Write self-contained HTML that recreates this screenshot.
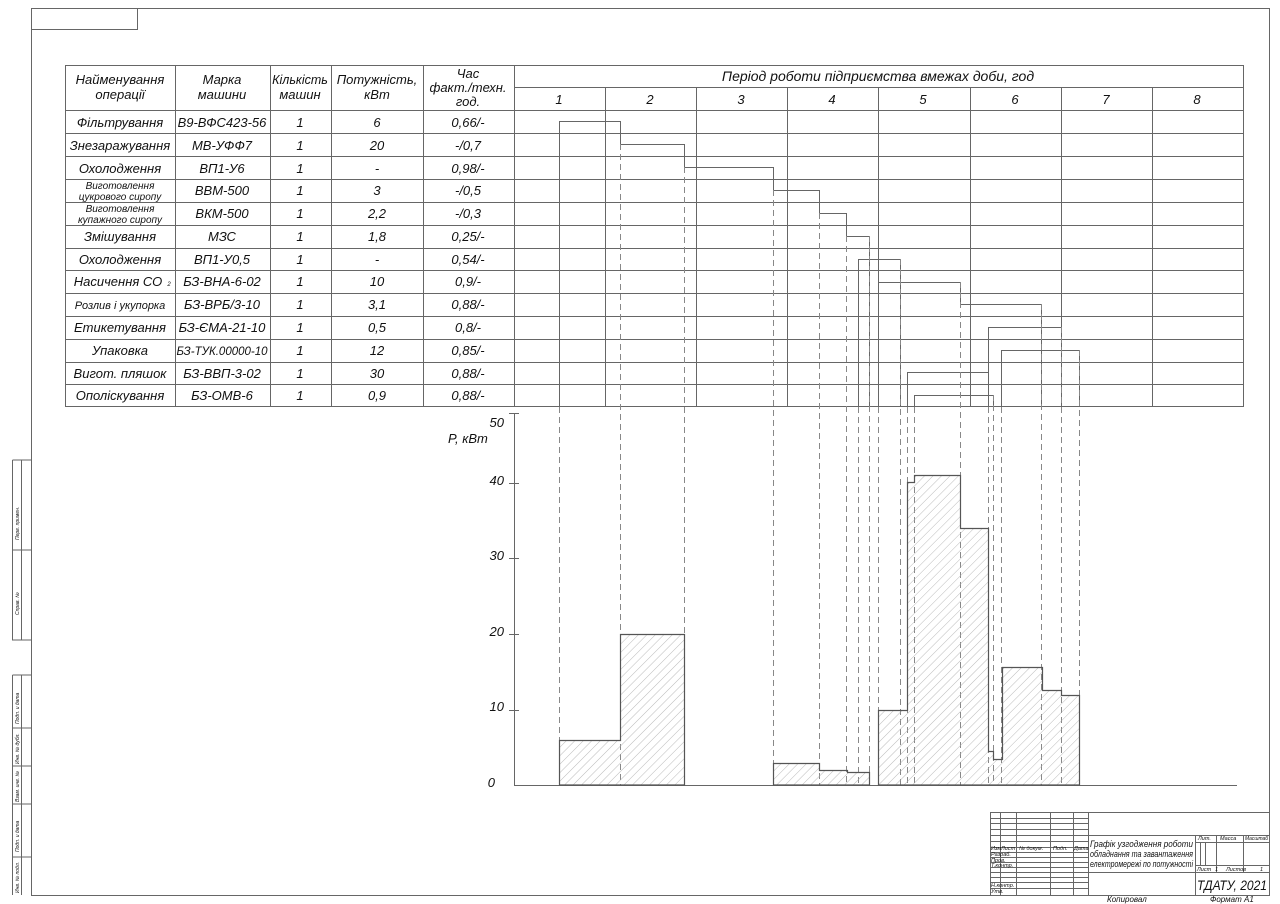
<!DOCTYPE html>
<html><head><meta charset="utf-8"><style>
html,body{margin:0;padding:0;background:#fff;width:1280px;height:904px;overflow:hidden}
svg{display:block}
text{font-family:"Liberation Sans",sans-serif;font-style:italic;fill:#111}
</style></head><body>
<svg width="1280" height="904" viewBox="0 0 1280 904" xmlns="http://www.w3.org/2000/svg">
<defs>
<pattern id="h" patternUnits="userSpaceOnUse" width="6" height="6" patternTransform="rotate(45)">
<line x1="0" y1="0" x2="0" y2="6" stroke="#aaa" stroke-width="0.8"/>
</pattern>
</defs>
<g stroke="#666" stroke-width="1" fill="none">
<rect x="31.5" y="8.5" width="1238" height="887"/>
<rect x="31.5" y="8.5" width="106" height="21"/>
<path d="M12.5 460V640H31.5M12.5 460H31.5M12.5 550H31.5M21.5 460V640"/>
<path d="M12.5 675V895M12.5 675H31.5M12.5 728H31.5M12.5 766H31.5M12.5 804H31.5M12.5 857H31.5M21.5 675V895"/>
<rect x="65.5" y="65.5" width="1178" height="341"/>
<path d="M175.5 65V407M270.5 65V407M331.5 65V407M423.5 65V407M514.5 65V407"/>
<path d="M514 87.5H1243"/>
<path d="M605.5 87V407M696.5 87V407M787.5 87V407M878.5 87V407M970.5 87V407M1061.5 87V407M1152.5 87V407"/>
<path d="M65 110.5H1243M65 133.5H1243M65 156.5H1243M65 179.5H1243M65 202.5H1243M65 225.5H1243M65 248.5H1243M65 270.5H1243M65 293.5H1243M65 316.5H1243M65 339.5H1243M65 362.5H1243M65 384.5H1243"/>
<path d="M559.5 407V121.5H620.5V144.5H684.5V167.5H773.5V190.5H819.5V213.5H846.5V236.5H869.5V407"/>
<path d="M858.5 407V259.5H900.5V407M878.5 282.5H960.5V304.5H1041.5V407M988.5 407V327.5H1061.5V407M1001.5 407V350.5H1079.5V407M907.5 407V372.5H988.5M914.5 407V395.5H993.5V407"/>
<g stroke-dasharray="6 4" stroke="#888">
<path d="M559.5 407V785M620.5 144V785M684.5 167V785M773.5 190V785M819.5 213V785M846.5 236V785M869.5 236V785M858.5 407V785M900.5 259V785M878.5 407V785M960.5 282V785M1041.5 304V785M988.5 407V785M1061.5 327V785M1001.5 407V785M1079.5 350V785M907.5 407V785M914.5 407V785M993.5 395V785"/>
</g>
<path d="M514.5 413V785.5H1237M509 413.5H519M509 483.5H519M509 558.5H519M509 634.5H519M509 710.5H519"/>
</g>
<g fill="url(#h)" stroke="#555" stroke-width="1.2">
<path d="M559.5 785V740.5H620.5V634.5H684.5V785Z"/>
<path d="M773.5 785V763.5H819.5V770.5H847.5V772.5H869.5V785Z"/>
<path d="M878.5 785V710.5H907.5V482.5H914.5V475.5H960.5V528.5H988.5V751.5H993.5V759.5H1002.5V667.5H1042.5V690.5H1061.5V695.5H1079.5V785Z"/>
</g>
<g stroke="#666" stroke-width="1" fill="none">
<path d="M990.5 812V895M990.5 812.5H1269"/>
<path d="M1000.5 812V895M1016.5 812V895M1050.5 812V895M1073.5 812V895M1088.5 812V895"/>
<path d="M990 818.5H1088M990 823.5H1088M990 829.5H1088M990 835.5H1269M990 841.5H1088M990 847.5H1088M990 852.5H1088M990 857.5H1088M990 862.5H1088M990 867.5H1088M990 872.5H1269M990 877.5H1088M990 882.5H1088M990 888.5H1088"/>
<path d="M1195.5 835V895M1216.5 835V872M1243.5 835V872M1195 842.5H1269M1195 865.5H1269M1200.5 842V865M1205.5 842V865"/>
</g>
<g font-size="5.5" style="fill:#444">
<text x="991" y="850">Изм</text><text x="1001" y="850">Лист</text><text x="1019" y="850">№ докум.</text><text x="1053" y="850">Подп.</text><text x="1074" y="850">Дата</text>
<text x="991" y="856">Разраб.</text><text x="991" y="862">Пров.</text><text x="991" y="867">Т.контр.</text>
<text x="991" y="887">Н.контр.</text><text x="991" y="893">Утв.</text>
<text x="1198" y="840">Лит.</text><text x="1220" y="840">Масса</text><text x="1245" y="840" textLength="23" lengthAdjust="spacingAndGlyphs">Масштаб</text>
<text x="1197" y="871">Лист</text><text x="1215" y="871">1</text><text x="1226" y="871">Листов</text><text x="1260" y="871">1</text>
</g>
<g font-size="9">
<text x="1090" y="847" textLength="103" lengthAdjust="spacingAndGlyphs">Графік узгодження роботи</text>
<text x="1090" y="857" textLength="103" lengthAdjust="spacingAndGlyphs">обладнання та завантаження</text>
<text x="1090" y="867" textLength="103" lengthAdjust="spacingAndGlyphs">електромережі по потужності</text>
</g>
<text x="1197" y="890" font-size="14" textLength="70" lengthAdjust="spacingAndGlyphs">ТДАТУ, 2021</text>
<text x="1107" y="902" font-size="8">Копировал</text>
<text x="1210" y="902" font-size="8">Формат  А1</text>
<g font-size="5" style="fill:#555">
<text transform="translate(19,540) rotate(-90)">Перв. примен.</text>
<text transform="translate(19,615) rotate(-90)">Справ. №</text>
<text transform="translate(19,724) rotate(-90)">Подп. и дата</text>
<text transform="translate(19,764) rotate(-90)">Инв. № дубл.</text>
<text transform="translate(19,802) rotate(-90)">Взам. инв. №</text>
<text transform="translate(19,852) rotate(-90)">Подп. и дата</text>
<text transform="translate(19,893) rotate(-90)">Инв. № подл.</text>
</g>
<g font-size="13" text-anchor="middle">
<text x="120" y="84">Найменування</text><text x="120" y="99">операції</text>
<text x="222" y="84">Марка</text><text x="222" y="99">машини</text>
<text x="300" y="84" font-size="12.5">Кількість</text><text x="300" y="99">машин</text>
<text x="377" y="84">Потужність,</text><text x="377" y="99">кВт</text>
<text x="468" y="78">Час</text><text x="468" y="92">факт./техн.</text><text x="468" y="106">год.</text>
<text x="878" y="81" font-size="14">Період роботи підприємства вмежах доби, год</text>
<text x="559" y="104">1</text><text x="650" y="104">2</text><text x="741" y="104">3</text><text x="832" y="104">4</text><text x="923" y="104">5</text><text x="1015" y="104">6</text><text x="1106" y="104">7</text><text x="1197" y="104">8</text>
</g>
<g font-size="13" text-anchor="middle">
<text x="120" y="127">Фільтрування</text><text x="222" y="127">В9-ВФС423-56</text><text x="300" y="127">1</text><text x="377" y="127">6</text><text x="468" y="127">0,66/-</text>
<text x="120" y="150">Знезаражування</text><text x="222" y="150">МВ-УФФ7</text><text x="300" y="150">1</text><text x="377" y="150">20</text><text x="468" y="150">-/0,7</text>
<text x="120" y="173">Охолодження</text><text x="222" y="173">ВП1-У6</text><text x="300" y="173">1</text><text x="377" y="173">-</text><text x="468" y="173">0,98/-</text>
<text x="120" y="189" font-size="10">Виготовлення</text><text x="120" y="200" font-size="10">цукрового сиропу</text><text x="222" y="195">ВВМ-500</text><text x="300" y="195">1</text><text x="377" y="195">3</text><text x="468" y="195">-/0,5</text>
<text x="120" y="212" font-size="10">Виготовлення</text><text x="120" y="223" font-size="10">купажного сиропу</text><text x="222" y="218">ВКМ-500</text><text x="300" y="218">1</text><text x="377" y="218">2,2</text><text x="468" y="218">-/0,3</text>
<text x="120" y="241">Змішування</text><text x="222" y="241">МЗС</text><text x="300" y="241">1</text><text x="377" y="241">1,8</text><text x="468" y="241">0,25/-</text>
<text x="120" y="264">Охолодження</text><text x="222" y="264">ВП1-У0,5</text><text x="300" y="264">1</text><text x="377" y="264">-</text><text x="468" y="264">0,54/-</text>
<text x="118" y="286">Насичення СО</text><text x="169" y="286" font-size="6">2</text><text x="222" y="286">БЗ-ВНА-6-02</text><text x="300" y="286">1</text><text x="377" y="286">10</text><text x="468" y="286">0,9/-</text>
<text x="120" y="309" font-size="11">Розлив і укупорка</text><text x="222" y="309">БЗ-ВРБ/3-10</text><text x="300" y="309">1</text><text x="377" y="309">3,1</text><text x="468" y="309">0,88/-</text>
<text x="120" y="332">Етикетування</text><text x="222" y="332">БЗ-ЄМА-21-10</text><text x="300" y="332">1</text><text x="377" y="332">0,5</text><text x="468" y="332">0,8/-</text>
<text x="120" y="355">Упаковка</text><text x="222" y="355" font-size="11.5">БЗ-ТУК.00000-10</text><text x="300" y="355">1</text><text x="377" y="355">12</text><text x="468" y="355">0,85/-</text>
<text x="120" y="378">Вигот. пляшок</text><text x="222" y="378">БЗ-ВВП-3-02</text><text x="300" y="378">1</text><text x="377" y="378">30</text><text x="468" y="378">0,88/-</text>
<text x="120" y="400">Ополіскування</text><text x="222" y="400">БЗ-ОМВ-6</text><text x="300" y="400">1</text><text x="377" y="400">0,9</text><text x="468" y="400">0,88/-</text>
</g>
<g font-size="13" text-anchor="end">
<text x="504" y="427">50</text><text x="504" y="485">40</text><text x="504" y="560">30</text><text x="504" y="636">20</text><text x="504" y="711">10</text><text x="495" y="787">0</text>
</g>
<text x="448" y="443" font-size="13">P, кВт</text>
</svg>
</body></html>
